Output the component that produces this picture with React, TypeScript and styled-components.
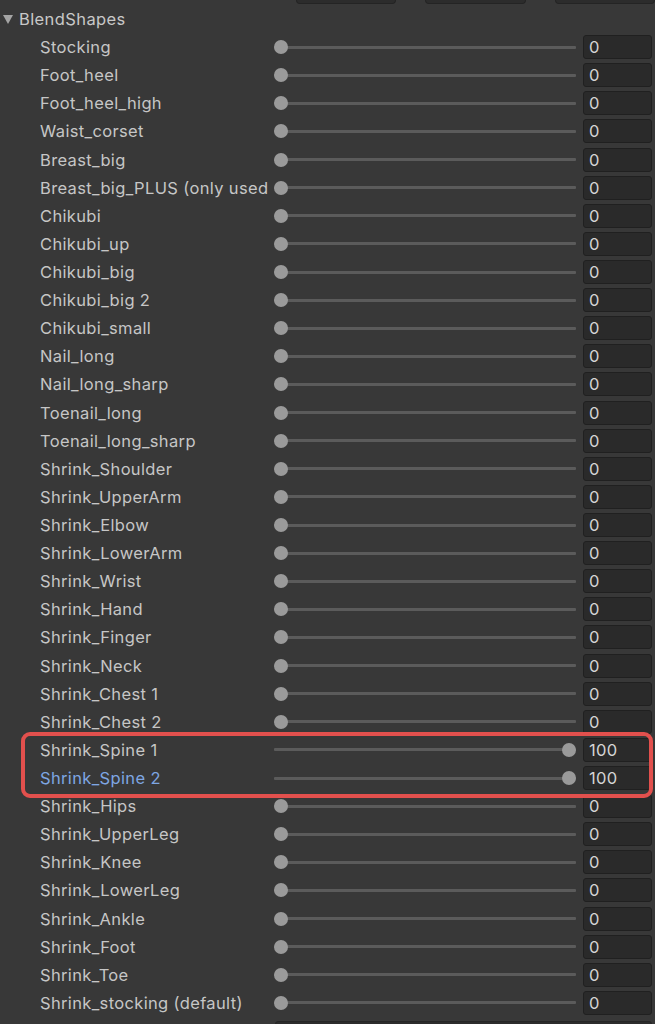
import React from 'react';
import styled, { createGlobalStyle } from 'styled-components';

const GlobalStyle = createGlobalStyle`
  html, body {
    margin: 0;
    padding: 0;
    background: #383838;
  }
  body {
    font-family: Inter, "Noto Sans", "Liberation Sans", sans-serif;
    overflow: hidden;
  }
`;

type Shape = { name: string; value: number; selected?: boolean };

const shapes: Shape[] = [
  { name: 'Stocking', value: 0 },
  { name: 'Foot_heel', value: 0 },
  { name: 'Foot_heel_high', value: 0 },
  { name: 'Waist_corset', value: 0 },
  { name: 'Breast_big', value: 0 },
  { name: 'Breast_big_PLUS (only used', value: 0 },
  { name: 'Chikubi', value: 0 },
  { name: 'Chikubi_up', value: 0 },
  { name: 'Chikubi_big', value: 0 },
  { name: 'Chikubi_big 2', value: 0 },
  { name: 'Chikubi_small', value: 0 },
  { name: 'Nail_long', value: 0 },
  { name: 'Nail_long_sharp', value: 0 },
  { name: 'Toenail_long', value: 0 },
  { name: 'Toenail_long_sharp', value: 0 },
  { name: 'Shrink_Shoulder', value: 0 },
  { name: 'Shrink_UpperArm', value: 0 },
  { name: 'Shrink_Elbow', value: 0 },
  { name: 'Shrink_LowerArm', value: 0 },
  { name: 'Shrink_Wrist', value: 0 },
  { name: 'Shrink_Hand', value: 0 },
  { name: 'Shrink_Finger', value: 0 },
  { name: 'Shrink_Neck', value: 0 },
  { name: 'Shrink_Chest 1', value: 0 },
  { name: 'Shrink_Chest 2', value: 0 },
];

const highlighted: Shape[] = [
  { name: 'Shrink_Spine 1', value: 100 },
  { name: 'Shrink_Spine 2', value: 100, selected: true },
];

const rest: Shape[] = [
  { name: 'Shrink_Hips', value: 0 },
  { name: 'Shrink_UpperLeg', value: 0 },
  { name: 'Shrink_Knee', value: 0 },
  { name: 'Shrink_LowerLeg', value: 0 },
  { name: 'Shrink_Ankle', value: 0 },
  { name: 'Shrink_Foot', value: 0 },
  { name: 'Shrink_Toe', value: 0 },
  { name: 'Shrink_stocking (default)', value: 0 },
];

function ShapeRow({ shape }: { shape: Shape }) {
  return (
    <Row>
      <Label selected={shape.selected}>{shape.name}</Label>
      <Slider>
        <Track />
        <Knob style={{ left: `calc((100% - 14px) * ${shape.value / 100})` }} />
      </Slider>
      <NumberField>{shape.value}</NumberField>
    </Row>
  );
}

export default function App() {
  return (
    <>
      <GlobalStyle />
      <Page>
        <TopBar>
          <TopButton />
          <TopButton />
          <TopButton />
        </TopBar>
        <Header>
          <Arrow />
          <HeaderText>BlendShapes</HeaderText>
        </Header>
        {shapes.map(s => (
          <ShapeRow key={s.name} shape={s} />
        ))}
        <Highlight>
          {highlighted.map(s => (
            <ShapeRow key={s.name} shape={s} />
          ))}
        </Highlight>
        {rest.map(s => (
          <ShapeRow key={s.name} shape={s} />
        ))}
        <BottomField />
      </Page>
    </>
  );
}

const Page = styled.div`
  width: 655px;
  height: 1024px;
  background: #383838;
  overflow: hidden;
`;

const TopBar = styled.div`
  display: flex;
  height: 5px;
  padding-left: 296px;
  gap: 29px;
  align-items: flex-start;
`;

const TopButton = styled.div`
  width: 100px;
  height: 3px;
  background: #2c2c2c;
  border: 1px solid #242424;
  border-top: none;
  border-radius: 0 0 4px 4px;
`;

const Header = styled.div`
  display: flex;
  align-items: center;
  height: 28.12px;
  padding-left: 3px;
`;

const Arrow = styled.div`
  width: 0;
  height: 0;
  border-left: 5px solid transparent;
  border-right: 5px solid transparent;
  border-top: 9px solid #a4a4a4;
  margin-right: 6px;
  margin-top: 1px;
`;

const HeaderText = styled.span`
  font-size: 16.5px;
  letter-spacing: 0.4px;
  color: #c8c8c8;
`;

const Row = styled.div`
  display: flex;
  align-items: center;
  height: 28.12px;
  padding-left: 40px;
`;

const Label = styled.span<{ selected?: boolean }>`
  width: 228px;
  flex: none;
  font-size: 16.5px;
  letter-spacing: 0.35px;
  color: ${p => (p.selected ? '#7ea6e3' : '#c6c6c6')};
  white-space: nowrap;
  overflow: hidden;
`;

const Slider = styled.div`
  position: relative;
  width: 302px;
  margin-left: 6px;
  height: 14px;
  flex: none;
  display: flex;
  align-items: center;
`;

const Track = styled.div`
  width: 100%;
  height: 3px;
  background: #5b5b5b;
  border-radius: 1px;
`;

const Knob = styled.div`
  position: absolute;
  top: 0;
  width: 14px;
  height: 14px;
  border-radius: 50%;
  background: #9a9a9a;
`;

const NumberField = styled.div`
  margin-left: 7px;
  width: 69px;
  height: 24px;
  box-sizing: border-box;
  flex: none;
  background: #2a2a2a;
  border: 1px solid #202020;
  border-radius: 3px;
  padding-left: 5px;
  font-size: 16.5px;
  letter-spacing: 0.35px;
  line-height: 22px;
  color: #d4d4d4;
`;

const Highlight = styled.div`
  position: relative;

  &::after {
    content: '';
    position: absolute;
    left: 21px;
    right: 2px;
    top: -4px;
    bottom: -6px;
    border: 4px solid #e2504d;
    border-radius: 9px;
    pointer-events: none;
  }
`;

const BottomField = styled.div`
  margin: 4px 3px 0 275px;
  height: 24px;
  background: #2c2c2c;
  border: 1px solid #252525;
  border-radius: 3px;
`;
